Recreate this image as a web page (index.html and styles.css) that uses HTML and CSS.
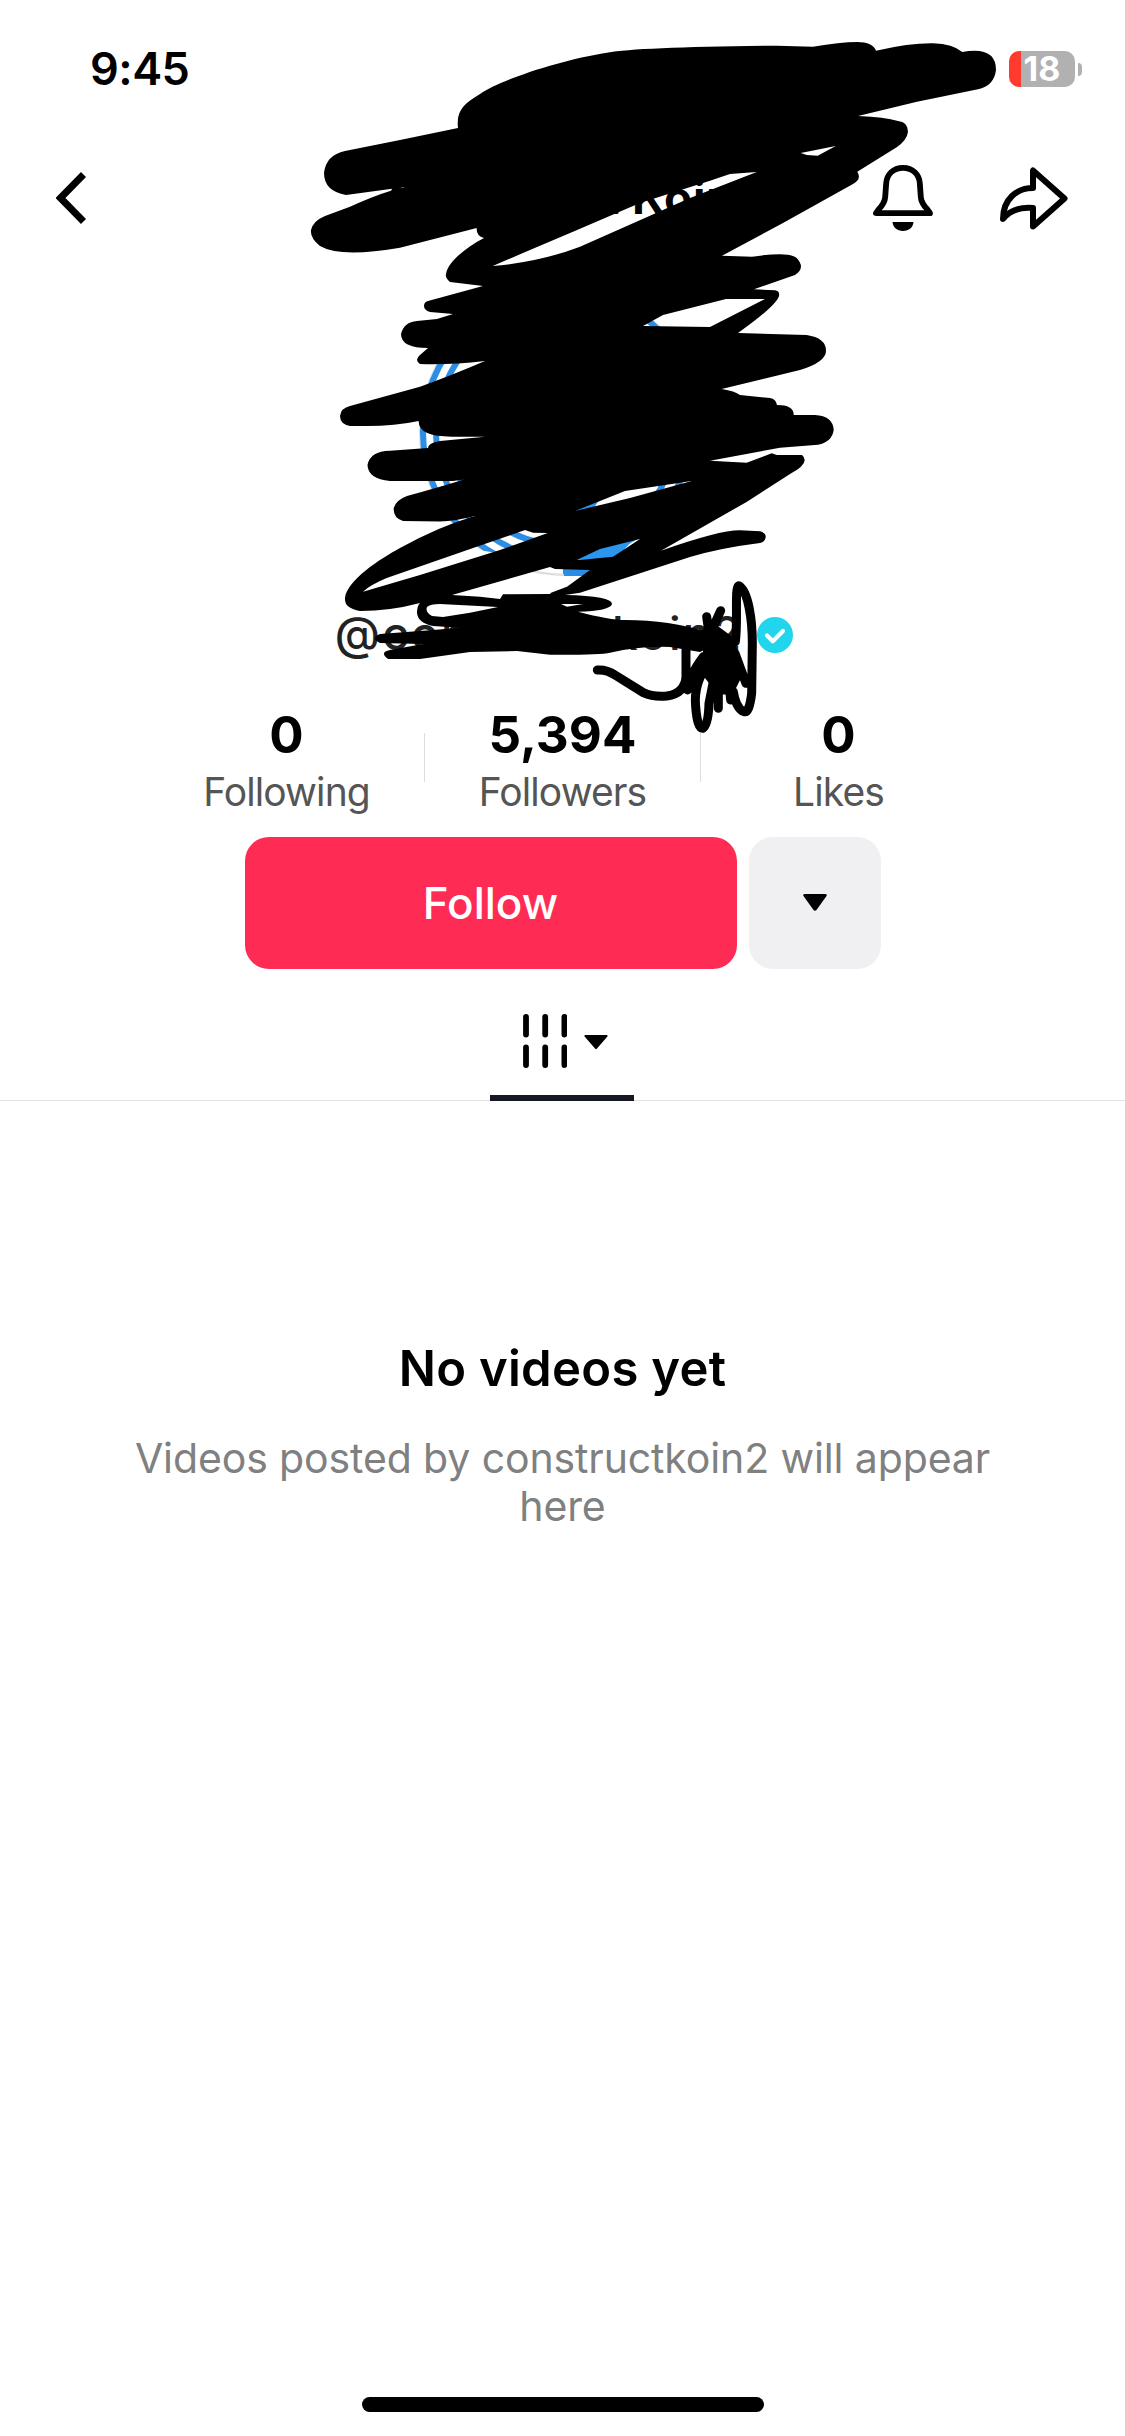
FILE: index.html
```
<!DOCTYPE html>
<html lang="en">
<head>
<meta charset="utf-8">
<title>Profile</title>
<link rel="stylesheet" href="styles.css">
</head>
<body>
<div class="screen">
  <header class="status">
    <span class="time">9:45</span>
    <div class="battery"><div class="cell"><span>18</span></div><i class="nub"></i></div>
  </header>
  <nav class="nav">
    <svg class="back" viewBox="0 0 30 52"><path d="M27.5 2.5 4.5 26 27.5 49.5" fill="none" stroke="#000" stroke-width="7"/></svg>
    <h1>Construct Koin</h1>
    <div class="actions">
      <svg class="bell" viewBox="0 0 60 66"><path d="M30 2.9C20 2.9 14 9.5 13.2 18L12.2 32C11.8 38 9 41 5.500 44.500L3 48.200H57L54.500 44.500C51 41 48.200 38 47.800 32L46.800 18C46 9.500 40 2.900 30 2.900Z" fill="none" stroke="#000" stroke-width="5.800" stroke-linejoin="round"/><path d="M19.500 57H40.500C40 62.500 36 66 30 66S20 62.500 19.500 57Z"/></svg>
      <svg class="share" viewBox="0 0 68 63"><path d="M33 3.500V21C17 21 3 32 3 52C10 43 20 40 33 41V59.500L64.500 31.500Z" fill="none" stroke="#000" stroke-width="6" stroke-linejoin="round"/></svg>
    </div>
  </nav>
  <div class="avatar">
    <svg viewBox="0 0 288 288"><circle cx="144" cy="144" r="143" fill="#fff" stroke="#ddd" stroke-width="2"/><g fill="none" stroke="#2b8de3" stroke-width="6"><circle cx="144" cy="144" r="140"/><circle cx="144" cy="144" r="127"/><path d="M33 165A113 113 0 0 0 130 256"/><path d="M251 180A113 113 0 0 1 190 247"/></g><path d="M60 262L144 276V290L95 292Z" fill="#fff"/><path d="M95 279Q120 286 145 287" fill="none" stroke="#ddd" stroke-width="2"/><path d="M145 281H190V288H145Z" fill="#2b8de3"/><path d="M140 200H188L165 235 225 240 190 278H140Z" fill="#2b96ef"/></svg>
  </div>
  <div class="handle">
    <span>@constructkoin2</span>
    <svg viewBox="0 0 36 36"><circle cx="18" cy="18" r="18" fill="#20d5ec"/><path d="M10 18.500 15.800 24.300 26 14" fill="none" stroke="#fff" stroke-width="4.200" stroke-linecap="round" stroke-linejoin="round"/></svg>
  </div>
  <section class="stats">
    <div><b>0</b><span>Following</span></div>
    <div><b>5,394</b><span>Followers</span></div>
    <div><b>0</b><span>Likes</span></div>
  </section>
  <div class="buttons">
    <button class="follow">Follow</button>
    <button class="more"><svg viewBox="0 0 24 17"><path d="M1.500 0H22.500Q24.500 .5 23.500 2L13.500 16Q12 17.500 10.500 16L.5 2Q-.5 .5 1.500 0Z"/></svg></button>
  </div>
  <div class="tabs">
    <div class="tab">
      <svg class="grid" viewBox="0 0 44 54"><path d="M3 3V20.500M22.200 3V20.500M41.400 3V20.500M3 33.500V51M22.200 33.500V51M41.400 33.500V51" stroke="#000" stroke-width="5.800" stroke-linecap="round"/></svg>
      <svg class="caret" viewBox="0 0 24 14"><path d="M1.500 0H22.500Q24.500 .5 23 2L13 13.500Q12 14.500 11 13.500L1 2Q-.5 .5 1.500 0Z"/></svg>
    </div>
  </div>
  <main class="empty">
    <h2>No videos yet</h2>
    <p>Videos posted by constructkoin2 will appear here</p>
  </main>
  <div class="home"></div>
  <svg class="scribble" viewBox="0 0 1125 780">
    <path fill-rule="evenodd" d="M458 128C456 110 464 104 480 94C500 80 560 60 607 52.700Q640 47 777 45.700L813 46.700Q840 42 857 42Q873 42 876 50.700Q910 43 933 43.300Q953 44 962.300 52Q996 46 996 70Q994 86 978 89.300L917 101.700 858 116Q885 117 898 121Q908 122 908 131.700Q907 140 896.700 147.300L857.300 171.700Q862 179 853 184L783 223 722 255.700 752 256.700Q790 251 796.700 258Q806 268 795 275L754 289.300 775 290.300Q780 291 779 296Q776 306 738 333L806.700 335Q826 338 826 350.700Q826 362 800 370L721.700 389Q735 391 740 395L770 398Q776 399 777 405Q794 405 793.700 415L815 415Q833 416 833.700 430Q832 442 818 444.700L780 447.700 710 460.700 746.700 462.700 771.700 453.300 776.700 455H802Q811 463 790 474L747 501.700 661 550.700Q720 530 740 530.300L760 531.300Q766 533 765.700 537Q765 542 760 543Q720 548 690 557L580 592.700 565 595Q612 596 612 604Q610 611 578 611.700Q610 620 625 620Q670 620 707 632L727 638 700 652 670 647Q640 646 610 652.700Q600 655 550 654.700L517 651 470 652 420 659H388Q379 652 390 650L423 644 380 643Q370 638 380 634L433 630 460 627.700 433 626Q418 623 417 613Q417 606 420 603Q390 611 360 611Q344 608 345 598C347 580 380 559 400 548Q440 526 475 516Q455 521 440 521.500L403 521Q393 518 393.700 508Q396 500 407 496Q440 487 464 479.500L453 481H390Q368 479 367.500 465Q370 451 390 450.700L428 448Q428 443 440 441L485 436.700H453Q418 437 418.700 421Q395 426 366.700 426H350Q340 424 340 416Q341 408 350 406L420 386.700Q450 376 485 361Q450 365 420 364Q414 360 420 355L428 348Q401 348 401 334Q404 322 417 321L437 319 453 314 430 312Q424 310 424 306Q424 302 428 301L483 286 450 282Q445 278 446 274C448 262 465 248 484 238Q476 236 476.700 228L400 247.700Q340 258 320 246Q310 238 311 230Q313 221 325 216L350 206.700Q385 191 405 187L346 195Q324 191 324 173Q326 155 345 151L400 140Z
      M492.700 266 530 250 573 231.700 640 203 710 180.700 730 174 756.700 172 690 198 580 246.700Q540 262 492.700 266Z
      M800.700 153 835.700 146 817.700 155.700 806.700 155Z
      M726 299H765L710 327 643 326 663 315Z
      M691.700 481 625 491 575 511 630 498Z
      M363 591.700Q370 585 386.700 578L476.700 546.700 525 530 533 532.700 547.700 533 500 550 420 575Z
      M576.700 560 600 549 640 539 613 556.700 580 560Z
      M452 595 550 567 555 569 590 570 567 586.700 551 592.700 550 594 503 594.300 500 599 480 596.700Z
      M432 616Q425 612 427 607Q430 604 440 604L498 607 470 612.700 443 617Z
      M561 604H583L567 606.700Z"/>
    <g transform="translate(310 560) scale(.33333)" fill="none" stroke="#000" stroke-width="27" stroke-linecap="round" stroke-linejoin="round">
      <path d="M862 330Q890 328 915 345L1000 398Q1030 412 1070 408Q1125 400 1128 350V270M1133 390Q1135 350 1180 290M1195 310Q1150 370 1157 440Q1162 505 1178 505Q1195 495 1197 430L1215 340M1225 445V300M1262 420 1250 300M1190 170 1198 225M1232 152 1200 222M1276 245C1282 200 1278 150 1280 100Q1282 75 1288 78C1315 95 1327 180 1327 250L1325 400Q1318 460 1302 455Q1278 445 1270 395M1275 280 1308 370"/>
      <path d="M1190 215 1210 205 1255 238 1275 290 1280 350 1260 390H1230L1195 345Z" fill="#000"/>
    </g>
  </svg>
</div>
</body>
</html>
```
FILE: styles.css
```
* { box-sizing: border-box; }
body { margin: 0; background: #fff; font-family: Inter, "Liberation Sans", sans-serif; color: #000; }
.screen { position: relative; width: 1125px; height: 2436px; display: flex; flex-direction: column; align-items: center; overflow: hidden; }
.screen > * { flex-shrink: 0; }
h1, h2, p { margin: 0; }
button { border: 0; padding: 0; font-family: inherit; }
svg { display: block; }
.status { width: 100%; height: 138px; padding: 0 43px 0 90px; display: flex; justify-content: space-between; align-items: center; }
.time { font-size: 45px; font-weight: 600; letter-spacing: -0.5px; line-height: 50px; }
.battery { display: flex; align-items: center; gap: 3px; }
.cell { width: 66px; height: 36px; border-radius: 10px; background: linear-gradient(to right, #ff3b30 12px, #b1b1b1 12px); color: #fff; font-size: 34px; font-weight: 700; line-height: 36px; text-align: center; }
.nub { width: 4px; height: 13px; border-radius: 0 4px 4px 0; background: #b1b1b1; }
.nav { width: 100%; height: 120px; padding: 0 57px 0 56px; display: grid; grid-template-columns: 1fr auto 1fr; align-items: center; }
.back { width: 30px; height: 52px; }
h1 { font-size: 46px; font-weight: 700; line-height: 56px; letter-spacing: 0.8px; padding-bottom: 3px; }
.actions { display: flex; justify-content: flex-end; align-items: center; gap: 67px; }
.bell { width: 60px; height: 66px; }
.share { width: 68px; height: 63px; }
.avatar { margin-top: 30px; width: 288px; height: 288px; }
.handle { margin-top: 31px; height: 56px; display: flex; align-items: center; gap: 14px; padding-left: 3px; color: #222; font-size: 46px; font-weight: 500; letter-spacing: 2.2px; }
.handle span { padding-bottom: 4px; }
.handle svg { width: 36px; height: 36px; }
.stats { margin-top: 41px; height: 120px; display: grid; grid-template-columns: repeat(3, 276px); }
.stats div { display: flex; flex-direction: column; align-items: center; background: linear-gradient(#ddd, #ddd) right 29px / 1px 49px no-repeat; }
.stats div:last-child { background: none; }
.stats b { font-size: 51px; font-weight: 700; line-height: 62px; }
.stats span { font-size: 39px; line-height: 52px; letter-spacing: -0.9px; color: #555; }
.buttons { margin-top: 13px; display: flex; gap: 12px; }
.buttons button { height: 132px; border-radius: 24px; display: flex; align-items: center; justify-content: center; }
.follow { width: 492px; background: #fe2c55; color: #fff; font-size: 44px; font-weight: 500; }
.more { width: 132px; background: #f0f0f2; }
.more svg { width: 24px; height: 17px; margin-bottom: 2px; }
.tabs { width: 100%; height: 132px; padding-right: 1px; border-bottom: 1px solid #e2e2e3; display: flex; justify-content: center; }
.tab { width: 144px; height: 132px; border-bottom: 6px solid #161823; display: flex; justify-content: center; align-items: center; gap: 17px; padding: 18px 0 0 6px; }
.grid { width: 44px; height: 54px; }
.caret { width: 24px; height: 14px; margin-top: 2px; }
.empty { margin-top: 238px; width: 900px; text-align: center; }
h2 { font-size: 49px; font-weight: 600; line-height: 60px; letter-spacing: 0.3px; }
.empty p { margin-top: 35px; font-size: 41px; line-height: 48px; letter-spacing: -0.12px; color: #808080; }
.home { margin-top: auto; margin-bottom: 24px; width: 402px; height: 15px; border-radius: 7.5px; background: #000; }
.scribble { position: absolute; left: 0; top: 0; width: 1125px; height: 780px; pointer-events: none; }
```
